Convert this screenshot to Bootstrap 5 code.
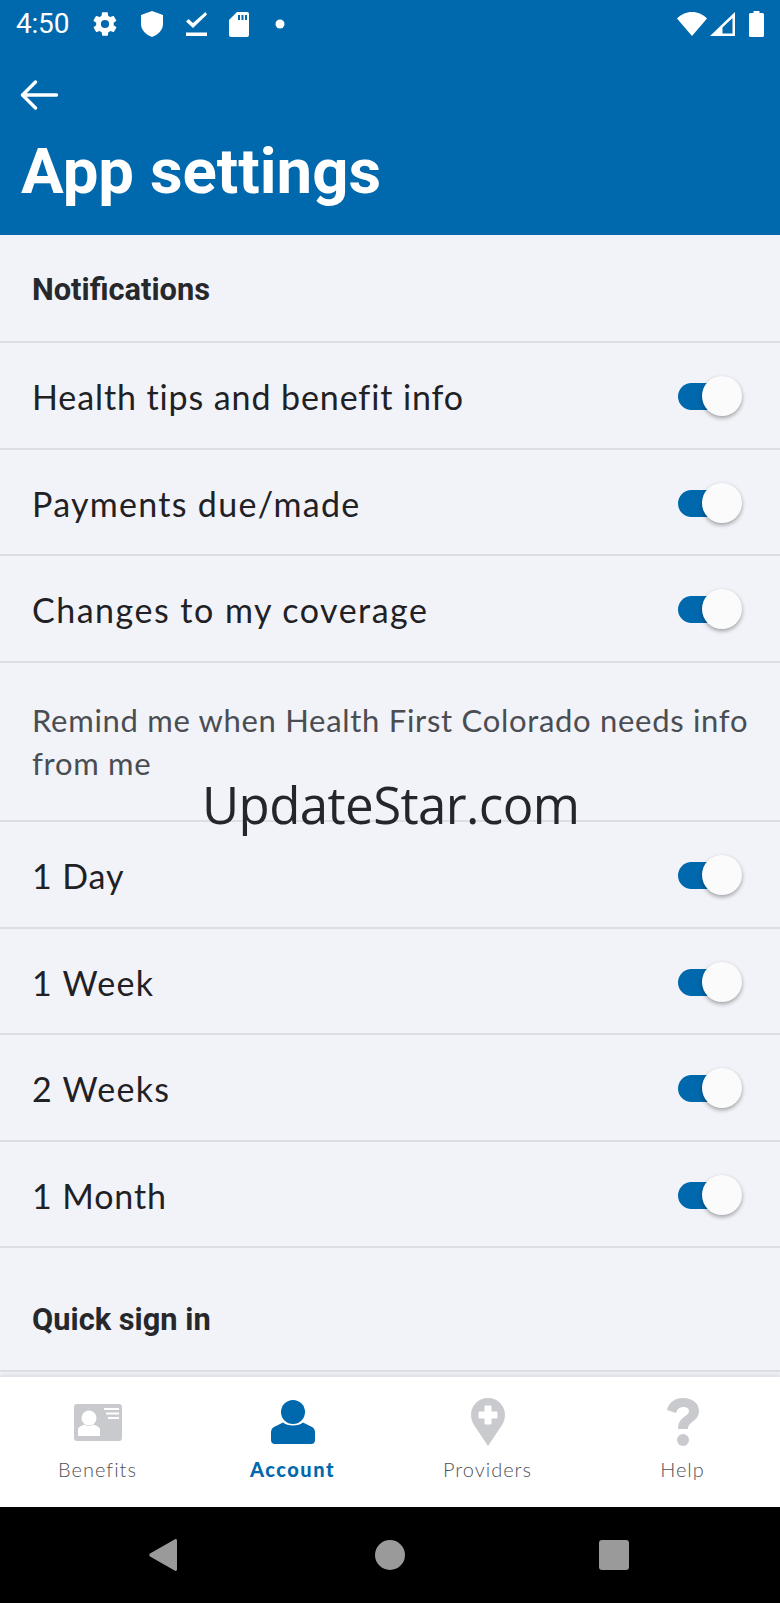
<!DOCTYPE html>
<html lang="en">

<head>
  <meta charset="UTF-8">
  <title>App settings</title>
  <meta name="viewport" content="width=device-width, initial-scale=1">
  <link href="https://cdn.jsdelivr.net/npm/bootstrap@5.3.0/dist/css/bootstrap.min.css" rel="stylesheet">
  <style>
    body { background: #f1f3f8; font-family: "Lato", sans-serif; color: #1f2124; overflow: hidden; }
    .app-header { background: #0068ac; color: #fff; height: 235px; font-family: "Roboto", sans-serif; }
    .status-bar { height: 48px; padding: 0 16px; }
    .status-time { font-size: 28px; width: 75px; letter-spacing: -.2px; }
    .status-icons { gap: 22px; }
    .sig-gap { margin-left: 3px; }
    .bat-gap { margin-left: 14px; }
    .back-row { padding: 32px 0 0 20px; height: 76px; }
    .page-title { font-family: "Roboto", sans-serif; font-size: 63.500px; font-weight: 700; line-height: 70px; margin: 13px 0 0 21px; }
    .settings-list { position: relative; }
    .set-row { border-bottom: 2px solid #dcdee3; padding: 3px 46px 0 32px; font-size: 34px; letter-spacing: .9px; }
    .row-std { height: 106.500px; }
    .row-head { font-family: "Roboto", sans-serif; font-weight: 700; font-size: 30.800px; letter-spacing: 0; color: #26282b; height: 108px; padding-top: 5px; }
    .row-head-tall { height: 124px; padding-top: 22px; }
    .row-note { height: 159.500px; font-size: 31px; line-height: 43px; color: #4a4d52; padding: 36px 20px 0 32px; letter-spacing: .7px; }
    .text-wide { letter-spacing: 1.300px; }
    .text-wider { letter-spacing: 1.500px; }
    .sw-track { display: block; position: relative; width: 56px; height: 27px; background: #0068ac; border-radius: 14px; }
    .sw-knob { position: absolute; left: 24px; top: -7px; width: 40px; height: 40px; border-radius: 50%; background: #fbfbfc; box-shadow: 0 2px 4px rgba(0,0,0,.35); }
    .watermark { position: absolute; top: 534px; left: 202px; font-family: "Open Sans", sans-serif; font-size: 51px; line-height: 70px; color: #23262a; letter-spacing: -.6px; }
    .tab-bar { background: #fff; height: 130px; box-shadow: 0 -3px 3px rgba(190,195,205,.35); }
    .tab-cell { width: 25%; padding-top: 19px; font-size: 20px; font-weight: 300; letter-spacing: 1px; color: #4f5256; line-height: 26px; }
    .tab-icon { height: 52px; margin-bottom: 8px; }
    .tab-on { color: #0068ac; font-weight: 900; letter-spacing: 1.500px; }
    .sys-bar { background: #000; height: 96px; padding-right: 2px; }
    .sys-keys { width: 480px; }
    .sys-home { margin-left: 4px; }
  </style>
</head>

<body class="d-flex flex-column vh-100">

  <header class="app-header flex-shrink-0">
    <div class="status-bar d-flex align-items-center">
      <span class="status-time">4:50</span>
      <div class="status-icons d-flex align-items-center flex-grow-1">
        <svg width="28" height="28" viewBox="0 0 24 24" fill="#fff"><path d="M19.400 13c.1-.3.1-.7.1-1s0-.7-.1-1l2.100-1.600c.2-.2.2-.4.1-.6l-2-3.500c-.1-.2-.4-.3-.6-.2l-2.500 1c-.5-.4-1.100-.7-1.700-1l-.4-2.600c0-.3-.2-.5-.5-.5h-4c-.3 0-.5.200-.5.500l-.4 2.600c-.6.300-1.200.600-1.700 1l-2.500-1c-.2-.100-.5 0-.6.200l-2 3.500c-.1.200-.1.500.1.600L4.500 11c0 .3-.1.700-.1 1s0 .7.100 1l-2.100 1.600c-.2.200-.2.400-.1.600l2 3.500c.1.200.4.300.6.200l2.500-1c.5.400 1.100.700 1.700 1l.4 2.600c0 .3.200.500.500.500h4c.3 0 .5-.2.500-.5l.4-2.600c.6-.3 1.200-.6 1.700-1l2.500 1c.2.100.5 0 .6-.2l2-3.500c.1-.2.1-.5-.1-.6zM12 15.500a3.500 3.500 0 1 1 0-7 3.500 3.500 0 0 1 0 7z"/></svg>
        <svg width="22" height="26" viewBox="0 0 22 26" fill="#fff"><path d="M11 0 0 4v9c0 6 5 11 11 13 6-2 11-7 11-13V4z"/></svg>
        <svg width="22" height="26" viewBox="0 0 22 26" fill="#fff"><path d="M1 25h21v-3.500H1zM20.500 1 8 12 3.500 8 1 10.500l7 6.500L22 3.500z"/></svg>
        <svg width="20" height="25" viewBox="0 0 20 25" fill="#fff" fill-rule="evenodd"><path d="M8 0h10a2 2 0 0 1 2 2v21a2 2 0 0 1-2 2H2a2 2 0 0 1-2-2V8zM9 3v5h2V3zm3.500 0v5h2V3zM16 3v5h2V3z"/></svg>
        <svg class="ms-1" width="10" height="10" viewBox="0 0 10 10" fill="#fff"><circle cx="5" cy="5" r="4.500"/></svg>
      </div>
      <div class="d-flex align-items-center">
        <svg width="30" height="24" viewBox="0 0 30 24" fill="#fff"><path d="M15 24 0 6.500C4 2.500 9 0 15 0s11 2.500 15 6.500z"/></svg>
        <svg class="sig-gap" width="25" height="24" viewBox="0 0 25 24" fill="#fff" fill-rule="evenodd"><path d="M25 0v24H0zM22.500 6 12.500 15.500V21.500h10z"/></svg>
        <svg class="bat-gap" width="15" height="26" viewBox="0 0 15 26" fill="#fff"><path d="M4.500 0h6v2h3a1.500 1.500 0 0 1 1.500 1.500v21a1.500 1.500 0 0 1-1.500 1.500h-12A1.500 1.500 0 0 1 0 24.500v-21A1.500 1.500 0 0 1 1.500 2h3z"/></svg>
      </div>
    </div>
    <div class="back-row">
      <svg class="d-block" width="38" height="30" viewBox="0 0 38 30" fill="none" stroke="#fff" stroke-width="3.400" stroke-linecap="round" stroke-linejoin="round"><path d="M36.500 15H3M15.500 2 2.500 15l13 13"/></svg>
    </div>
    <h1 class="page-title">App settings</h1>
  </header>

  <main class="settings-list flex-grow-1 overflow-hidden">
    <div class="set-row row-head d-flex align-items-center">Notifications</div>
    <div class="set-row row-std d-flex align-items-center justify-content-between">
      <span>Health tips and benefit info</span>
      <span class="sw-track"><span class="sw-knob"></span></span>
    </div>
    <div class="set-row row-std d-flex align-items-center justify-content-between">
      <span class="text-wide">Payments due/made</span>
      <span class="sw-track"><span class="sw-knob"></span></span>
    </div>
    <div class="set-row row-std d-flex align-items-center justify-content-between">
      <span class="text-wider">Changes to my coverage</span>
      <span class="sw-track"><span class="sw-knob"></span></span>
    </div>
    <div class="set-row row-note">Remind me when Health First Colorado needs info from me</div>
    <div class="set-row row-std d-flex align-items-center justify-content-between">
      <span>1 Day</span>
      <span class="sw-track"><span class="sw-knob"></span></span>
    </div>
    <div class="set-row row-std d-flex align-items-center justify-content-between">
      <span class="text-wide">1 Week</span>
      <span class="sw-track"><span class="sw-knob"></span></span>
    </div>
    <div class="set-row row-std d-flex align-items-center justify-content-between">
      <span class="text-wide">2 Weeks</span>
      <span class="sw-track"><span class="sw-knob"></span></span>
    </div>
    <div class="set-row row-std d-flex align-items-center justify-content-between">
      <span>1 Month</span>
      <span class="sw-track"><span class="sw-knob"></span></span>
    </div>
    <div class="set-row row-head row-head-tall d-flex align-items-center">Quick sign in</div>
    <div class="watermark">UpdateStar.com</div>
  </main>

  <nav class="tab-bar d-flex flex-shrink-0">
    <div class="tab-cell text-center">
      <div class="tab-icon d-flex justify-content-center align-items-center">
        <svg width="48" height="37" viewBox="0 0 48 37"><rect width="48" height="37" rx="3" fill="#c9cacd"/><circle cx="15" cy="14" r="7.500" fill="#fff"/><path d="M4 32v-6c0-3 3-4 7-5.500 2 2 6 2 8 0 4 1.500 7 2.500 7 5.500v6z" fill="#fff"/><path d="M30 5h15M32 9.500h13M34 14h11" stroke="#fff" stroke-width="2"/></svg>
      </div>
      <div>Benefits</div>
    </div>
    <div class="tab-cell tab-on text-center">
      <div class="tab-icon d-flex justify-content-center align-items-center">
        <svg width="44" height="44" viewBox="0 0 44 44" fill="#0068ac"><circle cx="22" cy="12" r="12"/><path d="M0 40V32c0-3 2-5 5-6l7-3.500c4 4 16 4 20 0l7 3.500c3 1 5 3 5 6v8a4 4 0 0 1-4 4H4a4 4 0 0 1-4-4z"/></svg>
      </div>
      <div>Account</div>
    </div>
    <div class="tab-cell text-center">
      <div class="tab-icon d-flex justify-content-center align-items-center">
        <svg width="34" height="48" viewBox="0 0 34 48"><path d="M17 0C7.500 0 0 7.500 0 17c0 5 2 9 5 13l12 18 12-18c3-4 5-8 5-13C34 7.500 26.500 0 17 0z" fill="#c9cacd"/><path d="M14 8h6v6h6v6h-6v6h-6v-6H8v-6h6z" fill="#fff" stroke="#fff" stroke-linejoin="round" stroke-width="1"/></svg>
      </div>
      <div>Providers</div>
    </div>
    <div class="tab-cell text-center">
      <div class="tab-icon d-flex justify-content-center align-items-center">
        <svg width="32" height="48" viewBox="0 0 32 48" fill="#c9cacd"><path d="M0 12C2 4 8 0 16 0c9 0 16 5 16 13 0 6-4 9-8 12-2 1.500-3 3-3 6H11c0-6 2-9 6-12 3-2 5-3.500 5-6s-2.500-4-6-4c-3.500 0-6 2-7 6z"/><circle cx="16" cy="42" r="6"/></svg>
      </div>
      <div>Help</div>
    </div>
  </nav>

  <footer class="sys-bar d-flex flex-shrink-0 align-items-center justify-content-center">
    <div class="sys-keys d-flex align-items-center justify-content-between">
      <svg width="28" height="32" viewBox="0 0 28 32" fill="#9a9a9a"><path d="M28 1.500V30.500c0 1-1 1.800-2 1.200L1 17.500c-1-.6-1-2.400 0-3L26 .3c1-.6 2 .2 2 1.200z"/></svg>
      <svg class="sys-home" width="30" height="30" viewBox="0 0 30 30" fill="#9a9a9a"><circle cx="15" cy="15" r="15"/></svg>
      <svg width="30" height="30" viewBox="0 0 30 30" fill="#9a9a9a"><rect width="30" height="30" rx="3"/></svg>
    </div>
  </footer>

  <script src="https://cdn.jsdelivr.net/npm/bootstrap@5.3.0/dist/js/bootstrap.bundle.min.js"></script>
</body>
</html>
